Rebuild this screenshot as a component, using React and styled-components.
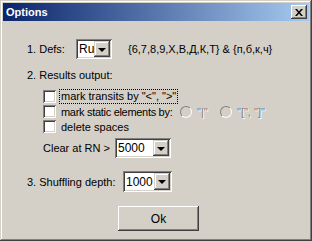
import React from 'react';
import styled, { createGlobalStyle } from 'styled-components';

const Global = createGlobalStyle`
  html, body {
    margin: 0;
    padding: 0;
    background: #d4d0c8;
  }
  body {
    font-family: "Liberation Sans", Arial, sans-serif;
    font-size: 11px;
    color: #000;
  }
`;

const Window = styled.div`
  box-sizing: border-box;
  width: 312px;
  height: 241px;
  background: #d4d0c8;
  padding: 3px;
  box-shadow: inset -1px -1px #404040, inset 1px 1px #d4d0c8,
    inset -2px -2px #808080, inset 2px 2px #ffffff;
  display: flex;
  flex-direction: column;
`;

const TitleBar = styled.div`
  height: 18px;
  display: flex;
  align-items: center;
  justify-content: space-between;
  padding: 0 2px 0 3px;
  background: linear-gradient(to right, #0a246a, #a6caf0);
  color: #fff;
  font-weight: bold;
  font-size: 11px;
`;

const CloseButton = styled.div`
  width: 16px;
  height: 14px;
  background: #d4d0c8;
  box-shadow: inset -1px -1px #404040, inset 1px 1px #ffffff,
    inset -2px -2px #808080;
  display: flex;
  align-items: center;
  justify-content: center;
`;

const Body = styled.div`
  padding: 0 0 0 24px;
  display: flex;
  flex-direction: column;
`;

const Row = styled.div`
  display: flex;
  align-items: center;
  height: ${(p) => p.$h || 15}px;
  margin-top: ${(p) => p.$mt || 0}px;
  padding-left: ${(p) => p.$indent || 0}px;
`;

const Label = styled.span`
  width: ${(p) => (p.$w ? `${p.$w}px` : 'auto')};
  margin-left: ${(p) => p.$ml || 0}px;
  letter-spacing: ${(p) => p.$ls || 0}px;
  flex-shrink: 0;
  white-space: nowrap;
`;

const ComboBox = styled.div`
  box-sizing: border-box;
  width: ${(p) => p.$w}px;
  height: 100%;
  background: #fff;
  padding: 2px;
  display: flex;
  align-items: stretch;
  box-shadow: inset 1px 1px #808080, inset -1px -1px #ffffff,
    inset 2px 2px #404040, inset -2px -2px #d4d0c8;
`;

const ComboText = styled.span`
  flex: 1;
  display: flex;
  align-items: center;
  padding-left: 1px;
  font-size: 12px;
`;

const DropButton = styled.div`
  width: 16px;
  background: #d4d0c8;
  box-shadow: inset -1px -1px #404040, inset 1px 1px #d4d0c8,
    inset -2px -2px #808080, inset 2px 2px #ffffff;
  display: flex;
  align-items: center;
  justify-content: center;
`;

const Arrow = styled.span`
  width: 0;
  height: 0;
  border-left: 4px solid transparent;
  border-right: 4px solid transparent;
  border-top: 4px solid #000;
  margin-top: 1px;
`;

const CheckBox = styled.span`
  box-sizing: border-box;
  width: 13px;
  height: 13px;
  background: #fff;
  flex-shrink: 0;
  margin-right: 5px;
  box-shadow: inset 1px 1px #808080, inset -1px -1px #ffffff,
    inset 2px 2px #404040, inset -2px -2px #d4d0c8;
`;

const Focus = styled.span`
  outline: 1px dotted #000;
  outline-offset: 0;
  padding: 0 1px;
  margin-left: -1px;
  line-height: 13px;
  white-space: nowrap;
`;

const Radio = styled.span`
  box-sizing: border-box;
  width: 12px;
  height: 12px;
  border-radius: 50%;
  border: 1px solid;
  border-color: #808080 #ffffff #ffffff #808080;
  background: #d4d0c8;
  margin: 0 5px 0 ${(p) => p.$ml || 0}px;
  flex-shrink: 0;
`;

const Disabled = styled.span`
  width: ${(p) => (p.$w ? `${p.$w}px` : 'auto')};
  color: #808080;
  text-shadow: 1px 1px #ffffff;
  white-space: nowrap;
`;

const OkButton = styled.div`
  box-sizing: border-box;
  width: 81px;
  height: 25px;
  margin-left: 91px;
  background: #d4d0c8;
  display: flex;
  align-items: center;
  justify-content: center;
  font-size: 12px;
  box-shadow: inset -1px -1px #404040, inset 1px 1px #ffffff,
    inset -2px -2px #808080, inset 2px 2px #d4d0c8;
`;

const Combo = ({ value, w }) => (
  <ComboBox $w={w}>
    <ComboText>{value}</ComboText>
    <DropButton>
      <Arrow />
    </DropButton>
  </ComboBox>
);

export default function App() {
  return (
    <>
      <Global />
      <Window>
        <TitleBar>
          <span>Options</span>
          <CloseButton>
            <svg width="8" height="7" viewBox="0 0 8 7">
              <path d="M0 0h2l2 2.5L6 0h2L5 3.5 8 7H6L4 4.5 2 7H0l3-3.5z" fill="#000" />
            </svg>
          </CloseButton>
        </TitleBar>
        <Body>
          <Row $h={20} $mt={18}>
            <Label $w={49}>1. Defs:</Label>
            <Combo value="Ru" w={36} />
            <Label $ml={16}>{'{6,7,8,9,Х,В,Д,К,Т} & {п,б,к,ч}'}</Label>
          </Row>
          <Row $h={14} $mt={9}>
            <Label>2. Results output:</Label>
          </Row>
          <Row $mt={7} $indent={16}>
            <CheckBox />
            <Focus>mark transits by "&lt;", "&gt;"</Focus>
          </Row>
          <Row $indent={16}>
            <CheckBox />
            <Label $w={114} $ls={-0.3}>mark static elements by:</Label>
            <Radio $ml={5} />
            <Disabled $w={23}>"|"</Disabled>
            <Radio />
            <Disabled>"[", "]"</Disabled>
          </Row>
          <Row $indent={16}>
            <CheckBox />
            <Label>delete spaces</Label>
          </Row>
          <Row $h={20} $mt={4} $indent={16}>
            <Label $w={72}>Clear at RN &gt;</Label>
            <Combo value="5000" w={56} />
          </Row>
          <Row $h={21} $mt={13}>
            <Label $w={96}>3. Shuffling depth:</Label>
            <Combo value="1000" w={49} />
          </Row>
          <Row $h={25} $mt={14}>
            <OkButton>Ok</OkButton>
          </Row>
        </Body>
      </Window>
    </>
  );
}
